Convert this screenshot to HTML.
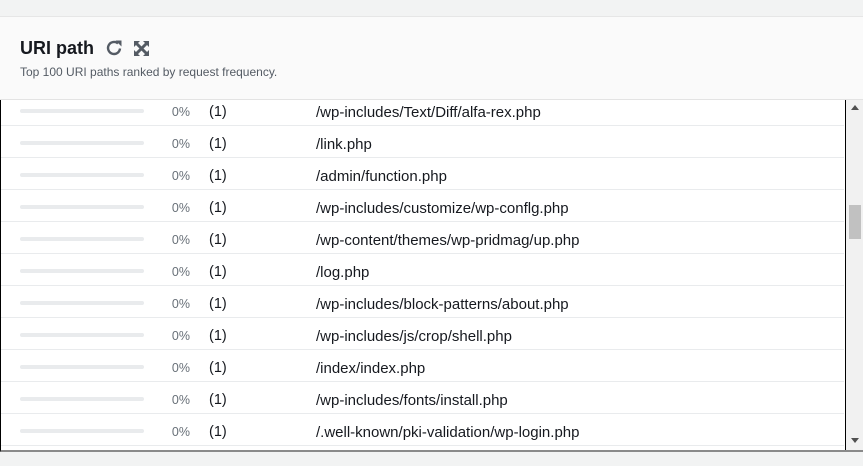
<!DOCTYPE html>
<html><head><meta charset="utf-8"><style>
*{margin:0;padding:0;box-sizing:border-box}
body{width:863px;height:466px;background:#f2f3f3;font-family:"Liberation Sans",Arial,sans-serif;position:relative;overflow:hidden}
.hdr{position:absolute;left:0;top:16px;width:863px;height:84px;background:#fafafa;border-top:1px solid #e6e6e6;border-bottom:1px solid #e3e3e3}
.title{position:absolute;left:20px;top:21px;font-size:18px;font-weight:bold;color:#16191f}
.sub{position:absolute;left:20px;top:48px;font-size:12px;color:#545b64}
.ic{position:absolute}
.box{position:absolute;left:0;top:100px;width:863px;height:352px;background:#fff;border-left:1px solid #000;border-bottom:2px solid #8a8a8a;overflow:hidden}
.rows{position:absolute;left:0;top:-6px;width:843px}
.row{height:32px;border-bottom:1px solid #e9ebed;position:relative;font-size:15px;color:#16191f}
.bar{position:absolute;left:19px;top:15px;width:124px;height:4px;background:#e9ebed;border-radius:2px}
.pct{position:absolute;left:150px;width:39px;text-align:right;top:11px;font-size:12.5px;color:#687078}
.cnt{position:absolute;left:208px;top:10px;font-size:14.5px}
.p{position:absolute;left:315px;top:10px}
.sb{position:absolute;left:844px;top:0;width:19px;height:350px;background:#f1f1f1;border-left:1px solid #000}
.th{position:absolute;left:3px;top:105px;width:12px;height:34px;background:#c1c1c1}
.up{position:absolute;left:5px;top:5px;width:0;height:0;border-left:4px solid transparent;border-right:4px solid transparent;border-bottom:5px solid #505050}
.dn{position:absolute;left:5px;top:338px;width:0;height:0;border-left:4px solid transparent;border-right:4px solid transparent;border-top:5px solid #505050}
</style></head><body>
<div class="hdr">
<div class="title">URI path</div>
<svg class="ic" style="left:105px;top:22px" width="18" height="18" viewBox="0 0 18 18"><path d="M15 9.5a6 6 0 1 1-2-5" fill="none" stroke="#545b64" stroke-width="2.4"/><path d="M10.5 1.5h6v6z" fill="#545b64"/></svg>
<svg class="ic" style="left:134px;top:24px" width="15" height="15" viewBox="0 0 15 15"><g fill="#545b64"><path d="M0 0h6L0 6z"/><path d="M15 0v6L9 0z"/><path d="M0 15v-6l6 6z"/><path d="M15 15h-6l6-6z"/></g><path d="M2 2l11 11M13 2L2 13" stroke="#545b64" stroke-width="3"/></svg>
<div class="sub">Top 100 URI paths ranked by request frequency.</div>
</div>
<div class="box">
<div class="rows">
<div class="row"><div class="bar"></div><div class="pct">0%</div><div class="cnt">(1)</div><div class="p">/wp-includes/Text/Diff/alfa-rex.php</div></div>
<div class="row"><div class="bar"></div><div class="pct">0%</div><div class="cnt">(1)</div><div class="p">/link.php</div></div>
<div class="row"><div class="bar"></div><div class="pct">0%</div><div class="cnt">(1)</div><div class="p">/admin/function.php</div></div>
<div class="row"><div class="bar"></div><div class="pct">0%</div><div class="cnt">(1)</div><div class="p">/wp-includes/customize/wp-conflg.php</div></div>
<div class="row"><div class="bar"></div><div class="pct">0%</div><div class="cnt">(1)</div><div class="p">/wp-content/themes/wp-pridmag/up.php</div></div>
<div class="row"><div class="bar"></div><div class="pct">0%</div><div class="cnt">(1)</div><div class="p">/log.php</div></div>
<div class="row"><div class="bar"></div><div class="pct">0%</div><div class="cnt">(1)</div><div class="p">/wp-includes/block-patterns/about.php</div></div>
<div class="row"><div class="bar"></div><div class="pct">0%</div><div class="cnt">(1)</div><div class="p">/wp-includes/js/crop/shell.php</div></div>
<div class="row"><div class="bar"></div><div class="pct">0%</div><div class="cnt">(1)</div><div class="p">/index/index.php</div></div>
<div class="row"><div class="bar"></div><div class="pct">0%</div><div class="cnt">(1)</div><div class="p">/wp-includes/fonts/install.php</div></div>
<div class="row"><div class="bar"></div><div class="pct">0%</div><div class="cnt">(1)</div><div class="p">/.well-known/pki-validation/wp-login.php</div></div>
</div>
<div class="sb"><div class="up"></div><div class="th"></div><div class="dn"></div></div>
</div>
</body></html>
